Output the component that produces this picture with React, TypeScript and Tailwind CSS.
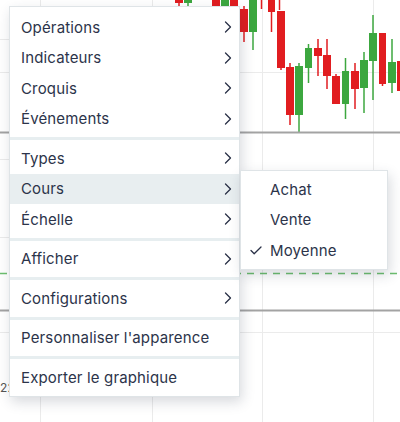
import React from "react"

type Candle = { x: number; w: number; top: number; bottom: number; wTop: number; wBottom: number; up: boolean }

// price candles behind the context menu
const candles: Candle[] = [
  { x: 175, w: 8, top: 0, bottom: 3, wTop: 0, wBottom: 6, up: false },
  { x: 184, w: 8, top: 0, bottom: 3, wTop: 0, wBottom: 6, up: true },
  { x: 212, w: 8, top: 0, bottom: 6, wTop: 0, wBottom: 6, up: false },
  { x: 221, w: 8, top: 0, bottom: 6, wTop: 0, wBottom: 6, up: true },
  { x: 230, w: 8, top: 0, bottom: 6, wTop: 0, wBottom: 6, up: false },
  { x: 240, w: 8, top: 9, bottom: 32, wTop: 6, wBottom: 42, up: false },
  { x: 249, w: 8, top: 0, bottom: 32, wTop: 0, wBottom: 50, up: true },
  { x: 261, w: 0, top: 0, bottom: 0, wTop: 0, wBottom: 9, up: false },
  { x: 268, w: 7, top: 0, bottom: 12, wTop: 0, wBottom: 32, up: false },
  { x: 279, w: 0, top: 0, bottom: 0, wTop: 0, wBottom: 10, up: false },
  { x: 277, w: 8, top: 11, bottom: 68, wTop: 11, wBottom: 70, up: false },
  { x: 286, w: 8, top: 67, bottom: 115, wTop: 63, wBottom: 125, up: false },
  { x: 295, w: 8, top: 66, bottom: 115, wTop: 63, wBottom: 133, up: true },
  { x: 305, w: 7, top: 48, bottom: 68, wTop: 44, wBottom: 83, up: true },
  { x: 314, w: 8, top: 48, bottom: 56, wTop: 39, wBottom: 76, up: false },
  { x: 323, w: 8, top: 55, bottom: 76, wTop: 39, wBottom: 89, up: false },
  { x: 332, w: 8, top: 76, bottom: 104, wTop: 74, wBottom: 104, up: false },
  { x: 342, w: 7, top: 71, bottom: 104, wTop: 58, wBottom: 119, up: true },
  { x: 351, w: 8, top: 71, bottom: 89, wTop: 63, wBottom: 109, up: false },
  { x: 360, w: 8, top: 60, bottom: 88, wTop: 52, wBottom: 113, up: true },
  { x: 369, w: 8, top: 33, bottom: 61, wTop: 15, wBottom: 100, up: true },
  { x: 379, w: 7, top: 33, bottom: 84, wTop: 33, wBottom: 86, up: false },
  { x: 388, w: 8, top: 62, bottom: 83, wTop: 39, wBottom: 93, up: true },
  { x: 397, w: 8, top: 61, bottom: 91, wTop: 58, wBottom: 93, up: false },
]

function Chart() {
  return (
    <svg className="absolute inset-0" width={400} height={422} viewBox="0 0 400 422">
      <rect width={400} height={422} fill="#ffffff" />
      {[40, 152, 262, 373].map((x) => (
        <line key={x} x1={x + 0.5} y1={0} x2={x + 0.5} y2={422} stroke="#ebebeb" />
      ))}
      <line x1={0} y1={72.5} x2={400} y2={72.5} stroke="#ebebeb" />
      <line x1={0} y1={332.5} x2={400} y2={332.5} stroke="#ebebeb" />
      {[39, 159, 237].map((y) => (
        <line key={y} x1={0} y1={y + 0.5} x2={12} y2={y + 0.5} stroke="#ebebeb" />
      ))}
      {candles.map((c, i) => {
        const color = c.up ? "#3ca73f" : "#e11d20"
        const cx = c.w ? c.x + c.w / 2 : c.x + 0.5
        return (
          <g key={i}>
            <line x1={cx} y1={c.wTop} x2={cx} y2={c.wBottom} stroke={color} strokeWidth={1.5} />
            {c.w > 0 && <rect x={c.x} y={c.top} width={c.w} height={c.bottom - c.top} fill={color} />}
          </g>
        )
      })}
      <rect x={0} y={131.5} width={400} height={2} fill="#a3a3a3" />
      <rect x={0} y={309.5} width={400} height={2} fill="#a3a3a3" />
      <line x1={0} y1={273.5} x2={400} y2={273.5} stroke="#6dbf6f" strokeWidth={1.5} strokeDasharray="7 6" />
      <text x={0} y={392} fontSize={12} fill="#555" fontFamily="Inter, sans-serif">22</text>
    </svg>
  )
}

function Chevron() {
  return (
    <svg width={8} height={12} viewBox="0 0 8 12" fill="none" className="shrink-0">
      <polyline points="1.5,1 6.5,6 1.5,11" stroke="#2a3147" strokeWidth={1.3} strokeLinecap="round" strokeLinejoin="round" />
    </svg>
  )
}

function Check() {
  return (
    <svg width={12} height={9} viewBox="0 0 12 9" fill="none">
      <polyline points="1,4.5 4.2,7.7 11,1" stroke="#2a3147" strokeWidth={1.3} strokeLinecap="round" strokeLinejoin="round" />
    </svg>
  )
}

type Item = { label: string; sub?: boolean; active?: boolean }

const sections: Item[][] = [
  [
    { label: "Opérations", sub: true },
    { label: "Indicateurs", sub: true },
    { label: "Croquis", sub: true },
    { label: "Événements", sub: true },
  ],
  [
    { label: "Types", sub: true },
    { label: "Cours", sub: true, active: true },
    { label: "Échelle", sub: true },
  ],
  [{ label: "Afficher", sub: true }],
  [{ label: "Configurations", sub: true }],
  [{ label: "Personnaliser l'apparence" }],
  [{ label: "Exporter le graphique" }],
]

const prices = [
  { label: "Achat", checked: false },
  { label: "Vente", checked: false },
  { label: "Moyenne", checked: true },
]

export default function App() {
  return (
    <div
      className="relative w-[400px] h-[422px] overflow-hidden bg-white text-[15px] tracking-[0.15px] text-[#2c344a]"
      style={{ fontFamily: "Inter, 'Noto Sans', sans-serif" }}
    >
      <Chart />

      {/* main context menu */}
      <div className="absolute left-[9px] top-[6px] w-[231px] bg-white border border-[#dfe4e7] shadow-[2px_5px_12px_rgba(40,50,70,0.18)]">
        {sections.map((items, si) => (
          <React.Fragment key={si}>
            {si > 0 && <div className="h-[3px] bg-[#e7eef0]" />}
            <div className={si === 0 ? "pt-[5px] pb-[3px]" : "py-[3px]"}>
              {items.map((item) => (
                <div
                  key={item.label}
                  className={
                    "flex h-[30.5px] items-center justify-between pl-[11px] pr-[7px] " +
                    (item.active ? "bg-[#e8eef0]" : "")
                  }
                >
                  <span className="leading-none whitespace-nowrap">{item.label}</span>
                  {item.sub && <Chevron />}
                </div>
              ))}
            </div>
          </React.Fragment>
        ))}
      </div>

      {/* price submenu */}
      <div className="absolute left-[240px] top-[170px] w-[148px] bg-white border border-[#dfe4e7] shadow-[2px_5px_12px_rgba(40,50,70,0.18)] pt-[3px] pb-[3px]">
        {prices.map((p) => (
          <div key={p.label} className="flex h-[30.5px] items-center">
            <div className="w-[29px] flex justify-end pr-[8px]">{p.checked && <Check />}</div>
            <span className="leading-none">{p.label}</span>
          </div>
        ))}
      </div>
    </div>
  )
}
